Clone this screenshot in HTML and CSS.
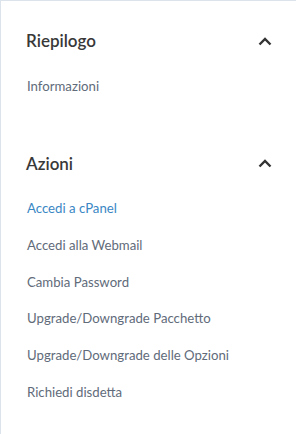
FILE: index.html
```html
<!DOCTYPE html>
<html lang="it">
<head>
  <meta charset="UTF-8">
  <meta name="viewport" content="width=device-width, initial-scale=1.0">
  <title>Riepilogo servizio</title>
  <link rel="stylesheet" href="styles.css">
</head>
<body>
  <div class="sidebar">
    <div class="panel">
      <div class="panel-head">
        <h3>Riepilogo</h3>
        <svg class="chevron" width="14" height="9" viewBox="0 0 14 9"><path d="M1.5 7.5 L7 2 L12.5 7.5" fill="none" stroke="#333" stroke-width="2.4"/></svg>
      </div>
      <ul class="menu">
        <li><a href="#">Informazioni</a></li>
      </ul>
    </div>
    <div class="panel">
      <div class="panel-head">
        <h3>Azioni</h3>
        <svg class="chevron" width="14" height="9" viewBox="0 0 14 9"><path d="M1.5 7.5 L7 2 L12.5 7.5" fill="none" stroke="#333" stroke-width="2.4"/></svg>
      </div>
      <ul class="menu">
        <li><a href="#" class="active">Accedi a cPanel</a></li>
        <li><a href="#">Accedi alla Webmail</a></li>
        <li><a href="#">Cambia Password</a></li>
        <li><a href="#">Upgrade/Downgrade Pacchetto</a></li>
        <li><a href="#">Upgrade/Downgrade delle Opzioni</a></li>
        <li><a href="#">Richiedi disdetta</a></li>
      </ul>
    </div>
  </div>
</body>
</html>
```

FILE: styles.css
```css
body {
  margin: 0;
  font-family: Lato, "Open Sans", sans-serif;
  background: #fff;
}
.sidebar {
  box-sizing: border-box;
  height: 434px;
  overflow: hidden;
  border-left: 1px solid #dde3ea;
  border-top: 1px solid #dde3ea;
  padding: 28px 25px 0 25px;
}
.panel {
  margin-bottom: 48px;
}
.panel-head {
  display: flex;
  align-items: center;
  justify-content: space-between;
  height: 24px;
}
.panel-head h3 {
  margin: 0;
  font-size: 17px;
  font-weight: 600;
  color: #383838;
  line-height: 24px;
}
.chevron {
  display: block;
  margin-right: -1px;
}
.menu {
  list-style: none;
  margin: 14px 0 0 0;
  padding: 0;
}
.menu li a {
  display: block;
  padding: 8.5px 0 8px 1px;
  line-height: 20.2px;
  font-size: 13.2px;
  color: #616b7a;
  text-decoration: none;
}
.menu li a.active {
  color: #3a87c4;
}
```
